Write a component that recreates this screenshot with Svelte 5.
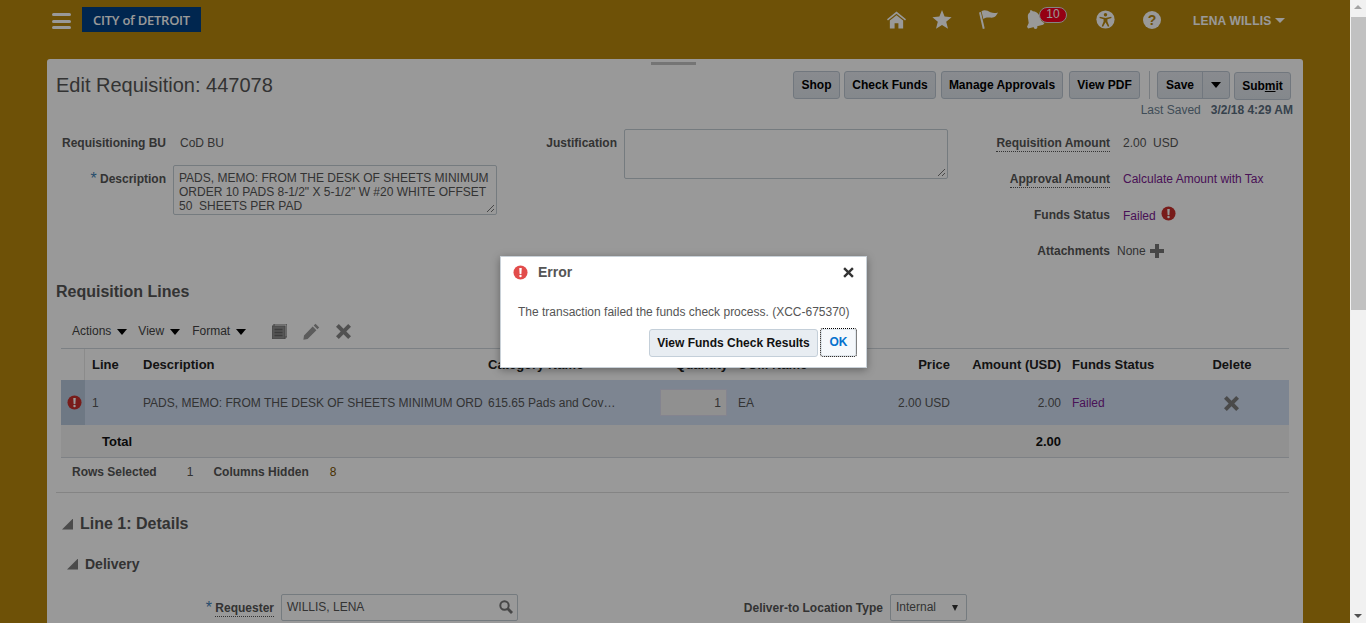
<script>
  const buttons = ['Shop', 'Check Funds', 'Manage Approvals', 'View PDF'];
</script>

<div class="shell">
  <div class="page">
    <header class="top">
      <div class="burger"><i></i><i></i><i></i></div>
      <div class="logo">CITY of DETROIT</div>
      <nav class="nav">
        <svg class="home" viewBox="0 0 20 18"><path d="M10 0 20 8.2 19 9.6 10 2.4 1 9.6 0 8.2Z"/><path d="M10 4 17 9.6V18H12V12.5H8V18H3V9.6Z"/></svg>
        <svg class="star" viewBox="0 0 20 19"><path d="M10 0 12.6 6.6 19.6 7.2 14.2 11.8 16 18.8 10 15 4 18.8 5.8 11.8.4 7.2 7.4 6.6Z"/></svg>
        <svg class="flag" viewBox="0 0 20 20"><path d="M0 2.6 2 2 6 19.4 4 20Z"/><path d="M2.6 1.2C6 -.6 9 .6 12 2.4 15 3.6 17.4 3.4 20 2.6 18.6 5.4 17 7.6 14.6 8 11.6 8.4 8.2 6.6 4.6 9.6Z"/></svg>
        <div class="bell-wrap">
          <svg class="bell" viewBox="0 0 19 20"><path d="M3 0.8C4 0 5.4 0.2 6 1.2 9 1.2 12 3 13.2 6.2L15 11.4 18.4 14 17 15.6 1.2 19.4 0 17.6 1.8 13.6 0.9 7.5C0.6 5 1.6 3 3.4 2Z"/><circle cx="9" cy="18" r="2"/></svg>
          <span class="badge">10</span>
        </div>
        <svg class="access" viewBox="0 0 20 20"><circle cx="10" cy="10" r="9.6"/><circle class="cut" cx="10" cy="5" r="1.8"/><path class="cut" d="M4 7.2 10 8.4 16 7.2 16.4 8.5 12 9.8 12 12 14 17 12.6 17.5 10 13 7.4 17.5 6 17 8 12 8 9.8 3.6 8.5Z"/></svg>
        <span class="help">?</span>
        <span class="user">LENA WILLIS<i class="caret"></i></span>
      </nav>
    </header>

    <main class="panel">
      <div class="handle"></div>
      <div class="title-row">
        <h1>Edit Requisition: 447078</h1>
        <div class="actions">
          {#each buttons as b}
            <button class="btn">{b}</button>
          {/each}
          <span class="sep"></span>
          <div class="split"><span class="split-main">Save</span><span class="split-arrow"><i class="tri"></i></span></div>
          <button class="btn submit">Sub<u>m</u>it</button>
        </div>
      </div>
      <div class="saved"><span>Last Saved</span><b>3/2/18 4:29 AM</b></div>

      <section class="form">
        <div class="fcol left">
          <label>Requisitioning BU</label><div class="val text">CoD BU</div>
          <label><em>*</em> Description</label>
          <div class="area desc">PADS, MEMO: FROM THE DESK OF SHEETS MINIMUM ORDER 10 PADS 8-1/2" X 5-1/2" W #20 WHITE OFFSET 50&nbsp; SHEETS PER PAD<svg class="grip" viewBox="0 0 9 9"><path d="M8 1 1 8M8 5 5 8" /></svg></div>
        </div>
        <div class="fcol mid">
          <label>Justification</label>
          <div class="area just"><svg class="grip" viewBox="0 0 9 9"><path d="M8 1 1 8M8 5 5 8" /></svg></div>
        </div>
        <div class="fcol right">
          <label><span class="dotted">Requisition Amount</span></label><div class="val text">2.00&nbsp; USD</div>
          <label><span class="dotted">Approval Amount</span></label><div class="val text link">Calculate Amount with Tax</div>
          <label>Funds Status</label>
          <div class="val text link status"><span class="failed">Failed</span>
            <svg class="err" viewBox="0 0 16 16"><circle cx="8" cy="8" r="7.5"/><path d="M6.7 3.2H9.3L8.9 9.6H7.1Z" fill="#fff"/><circle cx="8" cy="11.8" r="1.3" fill="#fff"/></svg>
          </div>
          <label>Attachments</label>
          <div class="val none">None <svg class="plus" viewBox="0 0 14 14"><path d="M5 0H9V5H14V9H9V14H5V9H0V5H5Z"/></svg></div>
        </div>
      </section>

      <h2>Requisition Lines</h2>
      <div class="toolbar">
        <span class="menu">Actions<i class="tri"></i></span>
        <span class="menu">View<i class="tri"></i></span>
        <span class="menu">Format<i class="tri"></i></span>
        <svg class="tool doc" viewBox="0 0 15 15"><path d="M2 0H15V13H2Z" fill="none" stroke="#777" stroke-width="1.2"/><path d="M0 2H13V15H0Z" fill="#8f8f8f" stroke="#777" stroke-width="1.2"/><path d="M2.5 5.5H10.5M2.5 8.5H10.5M2.5 11.5H10.5" stroke="#666" stroke-width="1.5"/></svg>
        <svg class="tool pencil" viewBox="0 0 17 17"><path d="M12.5.8 16.2 4.5 14.4 6.3 10.7 2.6ZM9.7 3.6 13.4 7.3 4.6 16 .4 16.8 1 12.4Z"/></svg>
        <svg class="tool x" viewBox="0 0 16 16"><path d="M3 0 8 5 13 0 16 3 11 8 16 13 13 16 8 11 3 16 0 13 5 8 0 3Z"/></svg>
      </div>

      <table class="grid">
        <colgroup>
          <col style="width:24px"/><col style="width:52px"/><col style="width:346px"/><col style="width:172px"/><col style="width:78px"/><col style="width:117px"/><col style="width:105px"/><col style="width:111px"/><col style="width:109px"/><col style="width:114px"/>
        </colgroup>
        <thead>
          <tr>
            <th class="gut"></th><th>Line</th><th>Description</th><th>Category Name</th><th class="r">Quantity</th><th>UOM Name</th><th class="r">Price</th><th class="r">Amount (USD)</th><th>Funds Status</th><th class="c">Delete</th>
          </tr>
        </thead>
        <tbody>
          <tr class="sel">
            <td class="gut"><svg class="err" viewBox="0 0 16 16"><circle cx="8" cy="8" r="7.5"/><path d="M6.7 3.2H9.3L8.9 9.6H7.1Z" fill="#fff"/><circle cx="8" cy="11.8" r="1.3" fill="#fff"/></svg></td>
            <td>1</td>
            <td class="clip">PADS, MEMO: FROM THE DESK OF SHEETS MINIMUM ORD</td>
            <td class="clip">615.65 Pads and Cov…</td>
            <td class="qtycell"><span class="qty">1</span></td>
            <td>EA</td>
            <td class="r">2.00 USD</td>
            <td class="r">2.00</td>
            <td class="purple">Failed</td>
            <td class="c"><svg class="rowx" viewBox="0 0 16 16"><path d="M3 0 8 5 13 0 16 3 11 8 16 13 13 16 8 11 3 16 0 13 5 8 0 3Z"/></svg></td>
          </tr>
          <tr class="total">
            <td colspan="2" class="tlabel">Total</td><td></td><td></td><td></td><td></td><td></td><td class="r">2.00</td><td></td><td></td>
          </tr>
        </tbody>
      </table>

      <div class="stats">
        <b>Rows Selected</b><span class="n1">1</span><b>Columns Hidden</b><span class="n2">8</span>
      </div>
      <div class="divider"></div>

      <div class="sect-h1"><i class="corner"></i>Line 1: Details</div>
      <div class="sect-h2"><i class="corner"></i>Delivery</div>
      <div class="bottom-row">
        <label class="b1"><em>*</em> <span class="dotted">Requester</span></label>
        <div class="input">WILLIS, LENA<svg class="search" viewBox="0 0 14 14"><circle cx="5.5" cy="5.5" r="4.2" fill="none" stroke-width="2"/><path d="M8.6 8.6 13 13" stroke-width="2.8" fill="none"/></svg></div>
        <label class="b2">Deliver-to Location Type</label>
        <div class="select">Internal<i class="mini"></i></div>
      </div>
    </main>

    <div class="overlay"></div>

    <div class="dialog" role="dialog">
      <div class="d-head">
        <svg class="derr" viewBox="0 0 16 16"><circle cx="8" cy="8" r="7.5"/><path d="M6.7 3.2H9.3L8.9 9.6H7.1Z" fill="#fff"/><circle cx="8" cy="11.8" r="1.3" fill="#fff"/></svg>
        <span class="d-title">Error</span>
        <svg class="d-close" viewBox="0 0 10 10"><path d="M1 1 9 9M9 1 1 9"/></svg>
      </div>
      <p>The transaction failed the funds check process. (XCC-675370)</p>
      <div class="d-actions">
        <button class="d-btn">View Funds Check Results</button>
        <button class="d-ok">OK</button>
      </div>
    </div>
  </div>

  <aside class="scrollbar">
    <i class="up"></i>
    <div class="thumb"></div>
    <i class="down"></i>
  </aside>
</div>

<style>
  :global(body) { margin: 0; background: #b7870c; }
  .shell {
    display: flex; width: 1366px; height: 623px; overflow: hidden;
    font: 12px/16px "Liberation Sans", Arial, sans-serif; color: #555;
  }
  .page { position: relative; width: 1350px; height: 623px; overflow: hidden; background: #b7870c; flex: none; }

  .top { display: flex; align-items: flex-start; height: 59px; box-sizing: border-box; padding: 7px 0 0 52px; }
  .burger { width: 19px; margin-top: 6px; display: flex; flex-direction: column; gap: 3.5px; }
  .burger i { display: block; height: 3px; background: #fff; border-radius: 2px; }
  .logo {
    margin-left: 11px; width: 119px; height: 25px; box-sizing: border-box; text-align: center;
    background: #004084; color: #fff; font: 600 13px/26px "Open Sans", sans-serif; letter-spacing: -.25px;
  }
  .nav { position: relative; margin-left: 686px; display: flex; align-items: flex-start; }
  .nav svg { display: block; fill: #fff; flex: none; }
  .home { width: 19px; height: 18px; margin-top: 4px; }
  .star { width: 20px; height: 19px; margin: 3px 0 0 26px; }
  .flag { width: 19px; height: 19px; margin: 3px 0 0 27px; }
  .bell-wrap { position: relative; margin: 3px 0 0 29px; width: 18px; height: 19px; }
  .bell { width: 18px; height: 19px; }
  .badge {
    position: absolute; left: 12px; top: -3px; width: 28px; height: 16px; box-sizing: border-box;
    border: 1.5px solid #ddd; border-radius: 8px; background: #f80020; color: #fff;
    font: 12px/13px "Liberation Sans", sans-serif; text-align: center;
  }
  .access { width: 19px; height: 19px; margin: 3px 0 0 51px; }
  .access .cut { fill: #b7870c; }
  .help {
    width: 18px; height: 18px; margin: 4px 0 0 28px; border-radius: 50%; background: #fff; color: #b7870c;
    font: bold 14px/18px "Liberation Sans", sans-serif; text-align: center; flex: none;
  }
  .user { margin: 6px 0 0 32px; color: #fff; font: bold 12px/16px "Liberation Sans", sans-serif; letter-spacing: .2px; white-space: nowrap; display: flex; align-items: center; }
  .caret { width: 0; height: 0; margin-left: 4px; margin-top: -1px; border: 5px solid transparent; border-top-color: #fff; border-bottom: 0; }

  .panel {
    position: relative; margin-left: 47px; width: 1256px; height: 700px; box-sizing: border-box;
    background: #fff; border-radius: 3px 3px 0 0; padding: 0 12px 0 9px;
  }
  .handle { width: 45px; height: 3px; margin: 0 0 0 595px; position: relative; top: 3px; background: #c4c4c4; }
  .title-row { display: flex; justify-content: space-between; align-items: flex-start; margin-top: 9px; height: 28px; }
  h1 { margin: 0; font: 20px/28px "Liberation Sans", sans-serif; color: #555; }
  .actions { display: flex; align-items: flex-start; }
  .btn, .split {
    box-sizing: border-box; height: 28px; border: 1px solid #bcc7d2; border-radius: 3px;
    background: linear-gradient(#e4e8ee, #dde3ea); color: #000; font: bold 12px/26px "Liberation Sans", sans-serif; padding: 0; margin: 0 0 0 4px;
  }
  .btn:nth-child(1) { width: 47px; margin-left: 0; }
  .btn:nth-child(2) { width: 92px; }
  .btn:nth-child(3) { width: 122px; margin-left: 5px; }
  .btn:nth-child(4) { width: 71px; margin-left: 6px; }
  .sep { width: 1px; height: 28px; background: #c8cfd6; margin: 0 7px 0 9px; }
  .split { display: flex; width: 73px; margin-left: 0; }
  .split-main { width: 44px; text-align: center; border-right: 1px solid #bcc7d2; }
  .split-arrow { flex: 1; display: flex; align-items: center; justify-content: center; }
  .btn.submit { width: 57px; margin-top: 1px; }
  .btn u { text-decoration: underline; }
  .tri { display: inline-block; width: 0; height: 0; border: 5px solid transparent; border-top: 6px solid #000; border-bottom: 0; }

  .saved { display: flex; justify-content: flex-end; gap: 10px; height: 22px; line-height: 23px; margin-right: -2px; color: #6a7f91; }
  .saved b { color: #5b6e7f; }

  .form { display: flex; margin-top: 4px; height: 144px; }
  .fcol { display: grid; grid-auto-rows: 36px; column-gap: 7px; align-items: start; flex: none; }
  .fcol label { text-align: right; font-weight: bold; line-height: 36px; white-space: nowrap; color: #555; }
  .fcol em { font-style: normal; color: #3f7fb5; font-size: 16px; vertical-align: -1px; font-weight: normal; }
  .left { grid-template-columns: 110px 324px; width: 441px; }
  .left .val.text { padding-left: 7px; }
  .mid { grid-template-columns: 120px 324px; width: 451px; }
  .right { grid-template-columns: 162px 180px; }
  .val { line-height: 36px; white-space: nowrap; }
  .val.text { padding-left: 6px; }
  .link { color: #7a2090; }
  .status { display: flex; align-items: center; height: 36px; }
  .failed { margin-top: 2px; }
  .status .err { width: 15px; height: 15px; margin: -3px 0 0 5px; }
  .none { display: flex; align-items: center; height: 36px; color: #555; }
  .plus { width: 14px; height: 14px; margin-left: 4px; fill: #777; }
  .dotted { border-bottom: 1px dotted #555; padding-bottom: 1px; }
  .area {
    position: relative; box-sizing: border-box; width: 324px; height: 50px; margin-top: 4px;
    border: 1px solid #c4cdd4; border-radius: 2px; padding: 5px 5px 0; line-height: 14px; color: #555; overflow: hidden;
  }
  .grip { position: absolute; right: 1px; bottom: 1px; width: 9px; height: 9px; stroke: #777; stroke-width: 1; fill: none; }

  h2 { margin: 13px 0 0; font: bold 16px/20px "Liberation Sans", sans-serif; color: #555; }
  .toolbar { display: flex; align-items: center; height: 34px; margin-top: 12px; padding-left: 16px; color: #444; }
  .menu { display: flex; align-items: center; margin-right: 11px; white-space: nowrap; }
  .menu:nth-child(2) { margin-right: 12px; }
  .menu .tri { margin-left: 6px; margin-top: 2px; }
  .tool { flex: none; }
  .doc { width: 15px; height: 15px; margin-left: 15px; }
  .pencil { width: 17px; height: 17px; margin-left: 16px; fill: #999; }
  .x { width: 15px; height: 15px; margin-left: 16px; fill: #888; }

  .grid { width: 1228px; margin-left: 5px; border-collapse: separate; border-spacing: 0; table-layout: fixed; border-top: 1px solid #cfd6dd; }
  th { height: 31px; padding: 0 5px; text-align: left; font: bold 13px/16px "Liberation Sans", sans-serif; color: #222; box-sizing: border-box; white-space: nowrap; }
  th:nth-child(2) { padding-left: 7px; }
  th:nth-child(3) { padding-left: 6px; }
  th:nth-child(9), td:nth-child(9) { padding-left: 6px; }
  th.gut { border-right: 1px solid #e8e8e8; }
  td { padding: 0 5px; color: #555; box-sizing: border-box; white-space: nowrap; }
  td:nth-child(2) { padding-left: 7px; }
  td:nth-child(3) { padding-left: 6px; }
  .r { text-align: right; }
  .c { text-align: center; }
  .clip { overflow: hidden; }
  .sel td { height: 45px; background: #d0def2; }
  .sel td.gut { background: #b7c8dc; padding: 0 0 0 6px; }
  .sel .err { display: block; width: 15px; height: 15px; }
  .qtycell { padding-left: 5px; }
  .qty { display: block; width: 67px; height: 27px; box-sizing: border-box; line-height: 27px; padding-right: 5px; text-align: right; background: #f0f0f0; border: 1px solid #dde; }
  .purple { color: #7a2090; }
  .rowx { display: inline-block; vertical-align: middle; width: 15px; height: 15px; fill: #7c7c7c; margin-left: -1px; }
  .total td { height: 33px; padding-top: 2px; background: #f2f2f2; font-weight: bold; font-size: 13px; color: #111; border-bottom: 1px solid #d2d8de; }
  .tlabel { padding-left: 41px; color: #222; }
  .err circle:first-child { fill: #c9302c; }
  .derr circle:first-child { fill: #e24c4b; }

  .stats { display: flex; height: 26px; box-sizing: border-box; padding: 1px 0 0 16px; line-height: 27px; color: #555; }
  .stats b { white-space: nowrap; }
  .n1 { margin: 0 0 0 30px; color: #555; }
  .stats b:nth-of-type(2) { margin-left: 20px; }
  .n2 { margin-left: 21px; color: #7a5200; }
  .divider { height: 1px; margin: 8px 2px 0 0; background: #dcdcdc; }

  .sect-h1, .sect-h2 { display: flex; align-items: center; white-space: nowrap; color: #555; font-weight: bold; }
  .sect-h1 { margin-top: 21px; font-size: 16px; line-height: 20px; padding-left: 6px; }
  .sect-h2 { margin-top: 20px; font-size: 14px; line-height: 20px; padding-left: 11px; }
  .corner { width: 11px; height: 11px; background: #7d7d7d; clip-path: polygon(100% 0, 100% 100%, 0 100%); margin-right: 7px; }

  .bottom-row { display: flex; align-items: center; margin-top: 20px; height: 27px; }
  .bottom-row label { font-weight: bold; text-align: right; white-space: nowrap; color: #555; }
  .bottom-row em { font-style: normal; color: #3f7fb5; font-size: 16px; font-weight: normal; vertical-align: -1px; }
  .b1 { width: 218px; }
  .b2 { width: 365px; }
  .input {
    position: relative; width: 237px; height: 27px; margin-left: 7px; box-sizing: border-box; border: 1px solid #c4cdd4; border-radius: 2px;
    padding-left: 5px; line-height: 25px; color: #555;
  }
  .search { position: absolute; right: 4px; top: 5px; width: 14px; height: 14px; stroke: #777; }
  .select {
    position: relative; width: 77px; height: 27px; margin-left: 7px; box-sizing: border-box; border: 1px solid #c4cdd4; border-radius: 2px;
    padding-left: 5px; line-height: 25px; color: #555;
  }
  .mini { position: absolute; right: 8px; top: 10px; width: 0; height: 0; border: 3.5px solid transparent; border-top: 6px solid #333; border-bottom: 0; }

  .overlay { position: absolute; inset: 0; background: rgba(0, 0, 0, .4); }

  .dialog {
    position: absolute; left: 500px; top: 256px; width: 367px; height: 112px; box-sizing: border-box;
    background: #fff; border: 1px solid #c9d1d8; box-shadow: 0 2px 8px rgba(0,0,0,.35);
  }
  .d-head { display: flex; align-items: center; height: 30px; padding-left: 12px; }
  .derr { width: 15px; height: 15px; flex: none; }
  .d-title { margin-left: 10px; font: bold 14px/18px "Liberation Sans", sans-serif; color: #555; }
  .d-close { width: 11px; height: 11px; margin-left: auto; margin-right: 12px; stroke: #333; stroke-width: 2.2; fill: none; }
  .dialog p { margin: 17px 0 0 17px; line-height: 16px; color: #555; white-space: nowrap; }
  .d-actions { display: flex; margin: 9px 0 0 148px; align-items: flex-start; }
  .d-btn {
    width: 169px; height: 28px; box-sizing: border-box; padding: 0; border: 1px solid #c4cfd9; border-radius: 3px;
    background: #e8edf2; color: #111; font: bold 12px/26px "Liberation Sans", sans-serif;
  }
  .d-ok {
    width: 35px; height: 27px; margin-left: 3px; box-sizing: border-box; padding: 0; border: 1px solid #dfe6ec; border-radius: 2px;
    background: #f5f8fb; color: #0572ce; font: bold 12px/25px "Liberation Sans", sans-serif; outline: 1px dotted #000; outline-offset: 0;
  }

  .scrollbar { position: relative; width: 16px; height: 623px; background: #f1f1f1; flex: none; }
  .thumb { position: absolute; left: 1px; right: 0; top: 17px; height: 293px; background: #c1c1c1; }
  .up, .down { position: absolute; left: 4px; width: 0; height: 0; border: 4px solid transparent; }
  .up { top: 5px; border-top: 0; border-bottom: 4px solid #a3a3a3; }
  .down { bottom: 5px; border-bottom: 0; border-top: 4px solid #505050; }
</style>
